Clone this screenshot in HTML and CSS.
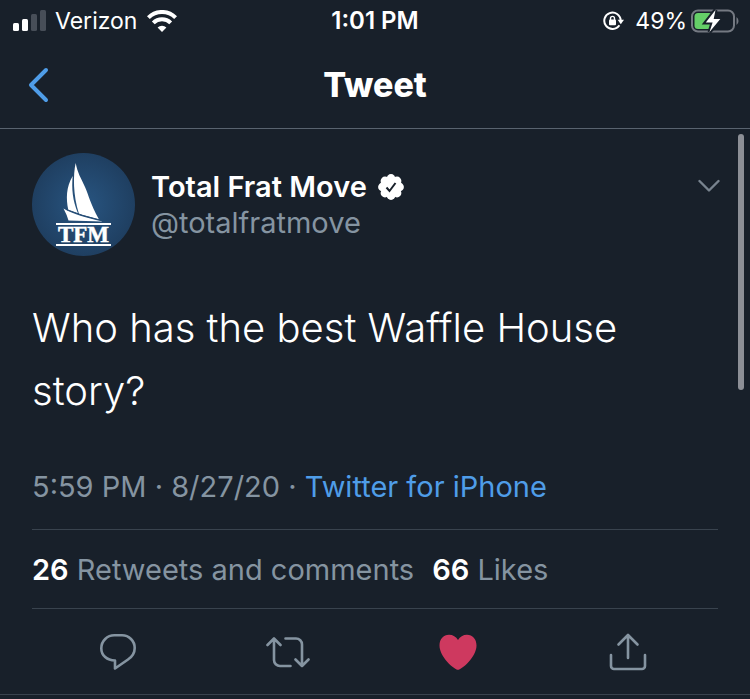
FILE: index.html
```html
<!DOCTYPE html>
<html lang="en">
<head>
<meta charset="utf-8">
<meta name="viewport" content="width=device-width, initial-scale=1">
<title>Tweet</title>
<link rel="stylesheet" href="styles.css">
</head>
<body>
<div class="status">
  <div class="status-left">
    <svg width="34" height="22" viewBox="0 0 34 22" fill="#fff" aria-hidden="true">
      <rect x="0" y="13" width="6" height="8" rx="1.5"/>
      <rect x="9" y="9" width="6" height="12" rx="1.5"/>
      <rect x="18" y="4" width="6" height="17" rx="1.5" fill="#474e58"/>
      <rect x="27" y="0" width="6" height="21" rx="1.5" fill="#474e58"/>
    </svg>
    <span class="carrier">Verizon</span>
    <svg width="30" height="22" viewBox="0 0 30 22" aria-hidden="true">
      <g fill="none" stroke="#fff" stroke-width="4">
        <path d="M1.4 7.6a19.2 19.2 0 0 1 27.2 0"/>
        <path d="M6.3 12.8a12.3 12.3 0 0 1 17.4 0"/>
      </g>
      <path d="M15 22l-4.4-4.5a6.2 6.2 0 0 1 8.8 0z" fill="#fff"/>
    </svg>
  </div>
  <time class="clock">1:01 PM</time>
  <div class="status-right">
    <svg width="22" height="20" viewBox="0 0 22 20" aria-hidden="true">
      <path d="M16.4 14.2a8.2 8.2 0 1 1 1.3-4.7" fill="none" stroke="#fff" stroke-width="2"/>
      <path d="M14.6 8.8h6.4l-3.2 4.4z" fill="#fff"/>
      <rect x="6" y="8.6" width="7" height="5.6" rx="1" fill="#fff"/>
      <path d="M7.5 9V7.4a2 2 0 0 1 4 0V9" fill="none" stroke="#fff" stroke-width="1.4"/>
    </svg>
    <span class="percent">49%</span>
    <svg width="48" height="24" viewBox="0 0 48 24" aria-hidden="true">
      <rect x="1" y="1.5" width="42" height="21" rx="6" fill="none" stroke="#747982" stroke-width="2"/>
      <path d="M45.5 8v8q2-1.300 2-4t-2-4z" fill="#747982"/>
      <rect x="3.5" y="4" width="18" height="16" rx="3.5" fill="#65cf68"/>
      <path d="M24.5 1L14.800 13.500h6.800L18.500 23 29.300 10h-6.600z" fill="#fff" stroke="#18202a" stroke-width="4" paint-order="stroke"/>
    </svg>
  </div>
</div>

<header class="nav">
  <button class="icon-button back" aria-label="Back">
    <svg width="22" height="36" viewBox="0 0 22 36" fill="none" stroke="#4f9de8" stroke-width="4" stroke-linecap="round" stroke-linejoin="round"><path d="M18 3L3 18l15 15"/></svg>
  </button>
  <h1 class="title">Tweet</h1>
</header>

<main class="content">
  <div class="scrollbar" aria-hidden="true"></div>
  <article class="tweet">
    <div class="author">
      <svg class="avatar" width="103" height="103" viewBox="0 0 103 103" role="img" aria-label="TFM">
        <defs><radialGradient id="sea"><stop offset="0" stop-color="#285581"/><stop offset="1" stop-color="#1f3f61"/></radialGradient></defs>
        <circle cx="51.5" cy="51.5" r="51.5" fill="url(#sea)"/>
        <g fill="#fff">
          <path d="M43.700 10C41 22 41 42 47 61L67 66.500C58 50 57 43 53 34C49 25 45.500 20 43.700 10z"/>
          <path d="M40.700 23C34 34 34 46 36.300 57L46 60.500C40.500 47 39.500 36 40.700 23z"/>
          <path d="M31.500 55.500C40 61 55 65 71 68.600L36.500 67.500Q35 62 31.500 55.500z"/>
          <path d="M24 70h55v2H24zM24 91h55v2H24z"/>
        </g>
        <path d="M34.500 56.500Q50 63 68 67" fill="none" stroke="#254b74"/>
        <text class="avatar-text" x="51.5" y="89" text-anchor="middle">TFM</text>
      </svg>
      <div class="names">
        <div class="name">Total Frat Move
          <svg width="26" height="26" viewBox="0 0 26 26" role="img" aria-label="Verified">
            <g fill="#fff"><circle cx="13" cy="13" r="10"/><circle cx="13" cy="4.5" r="4.4"/><circle cx="19" cy="7" r="4.4"/><circle cx="21.5" cy="13" r="4.4"/><circle cx="19" cy="19" r="4.4"/><circle cx="13" cy="21.5" r="4.4"/><circle cx="7" cy="19" r="4.4"/><circle cx="4.5" cy="13" r="4.4"/><circle cx="7" cy="7" r="4.4"/></g>
            <path d="M8.500 13.500l3 3.500 6-8" fill="none" stroke="#18202a" stroke-width="2"/>
          </svg>
        </div>
        <div class="handle">@totalfratmove</div>
      </div>
      <button class="icon-button more" aria-label="More">
        <svg width="22" height="14" viewBox="0 0 22 14" fill="none" stroke="#78838e" stroke-width="2.4" stroke-linecap="round" stroke-linejoin="round"><path d="M1.500 2l9.500 9.500L20.500 2"/></svg>
      </button>
    </div>
    <p class="message">Who has the best Waffle House story?</p>
    <p class="meta">5:59 PM · 8/27/20 · <a href="#">Twitter for iPhone</a></p>
    <div class="stats">
      <span><strong>26</strong> Retweets and comments</span>
      <span><strong>66</strong> Likes</span>
    </div>
    <div class="actions">
      <button class="icon-button" aria-label="Reply">
        <svg width="44" height="40" viewBox="0 0 44 40" fill="none" stroke="#8594a1" stroke-width="2.6" stroke-linejoin="round"><path d="M18.500 3.300H26A12.700 12.700 0 0 1 38.700 16c0 5-2.300 8.600-6.700 11.500L19 36.500V28.500C11 28.500 5.300 23.500 5.300 16.200A13 13 0 0 1 18.500 3.300z"/></svg>
      </button>
      <button class="icon-button" aria-label="Retweet">
        <svg width="44" height="40" viewBox="0 0 44 40" fill="none" stroke="#8594a1" stroke-width="2.6" stroke-linecap="round" stroke-linejoin="round"><path d="M1.500 13L8 6.500l6.500 6.500M8 7v21a6 6 0 0 0 6 6h10.500M19.500 6.500H30a6 6 0 0 1 6 6V34M29.500 27.500L36 34l6.500-6.500"/></svg>
      </button>
      <button class="icon-button" aria-label="Unlike">
        <svg width="44" height="40" viewBox="0 0 44 40" fill="#ce395f"><path d="M22 37.800C18.500 37.800 3.500 25 3.500 13.500 3.500 7 7.500 2.800 13 2.800c4 0 7 2 9 5.200 2-3.200 5-5.200 9-5.200 5.500 0 9.500 4.200 9.500 10.700C40.500 25 25.500 37.800 22 37.800z"/></svg>
      </button>
      <button class="icon-button" aria-label="Share">
        <svg width="44" height="40" viewBox="0 0 44 40" fill="none" stroke="#8594a1" stroke-width="2.6" stroke-linecap="round" stroke-linejoin="round"><path d="M22 26V3.500M12.500 12.500L22 3l9.500 9.500M5 23v11a3 3 0 0 0 3 3h28a3 3 0 0 0 3-3V23"/></svg>
      </button>
    </div>
  </article>
</main>
</body>
</html>
```
FILE: styles.css
```css
* {
  box-sizing: border-box;
}

body {
  margin: 0;
  background: #18202a;
  color: #fff;
  font-family: Inter, "Liberation Sans", sans-serif;
}

svg {
  display: block;
  flex: none;
}

h1,
p {
  margin: 0;
}

.icon-button {
  display: flex;
  padding: 0;
  border: 0;
  background: none;
  cursor: pointer;
}

.status {
  display: grid;
  grid-template-columns: 1fr auto 1fr;
  align-items: center;
  height: 41px;
  padding: 0 11px;
  font-size: 23px;
}

.status-left,
.status-right {
  display: flex;
  align-items: center;
}

.status-left {
  padding-left: 2px;
}

.carrier {
  margin: 0 10px 0 8px;
}

.clock {
  font-size: 24px;
  font-weight: 600;
}

.status-right {
  justify-content: flex-end;
}

.percent {
  margin: 0 4px 0 10px;
}

.nav {
  display: grid;
  grid-template-columns: 1fr auto 1fr;
  align-items: center;
  height: 88px;
  padding: 0 28px;
  border-bottom: 1px solid #59636f;
}

.title {
  font-size: 34px;
  font-weight: 800;
  line-height: 40px;
}

.content {
  position: relative;
}

.scrollbar {
  position: absolute;
  top: 5px;
  right: 6px;
  width: 6px;
  height: 256px;
  border-radius: 3px;
  background: #8c8f96;
}

.tweet {
  padding: 24px 32px 0;
  border-bottom: 1px solid #39434e;
}

.author {
  display: flex;
  align-items: flex-start;
  margin-right: -2px;
}

.avatar-text {
  fill: #fff;
  stroke: #fff;
  stroke-width: 0.5px;
  font-family: "Liberation Serif", serif;
  font-size: 23px;
  font-weight: 700;
}

.names {
  flex: 1;
  padding: 16px 0 0 16px;
  font-size: 29px;
  line-height: 36px;
}

.name {
  display: flex;
  align-items: center;
  gap: 11px;
  font-weight: 600;
}

.handle,
.meta,
.stats {
  color: #8594a1;
}

.more {
  margin-top: 26px;
}

.message {
  padding-top: 40px;
  font-size: 40px;
  font-weight: 300;
  line-height: 63px;
}

.meta {
  padding: 47px 0 24px;
  font-size: 29px;
  line-height: 36px;
}

.meta a {
  color: #4f9de8;
  text-decoration: none;
}

.stats {
  display: flex;
  gap: 18px;
  padding: 22px 0 20px;
  border-top: 1px solid #39434e;
  border-bottom: 1px solid #39434e;
  font-size: 29px;
  line-height: 36px;
}

.stats strong {
  color: #fff;
  font-weight: 600;
}

.actions {
  display: grid;
  grid-template-columns: repeat(4, 1fr);
  justify-items: center;
  padding: 23px 5px 22px 1px;
}
```
